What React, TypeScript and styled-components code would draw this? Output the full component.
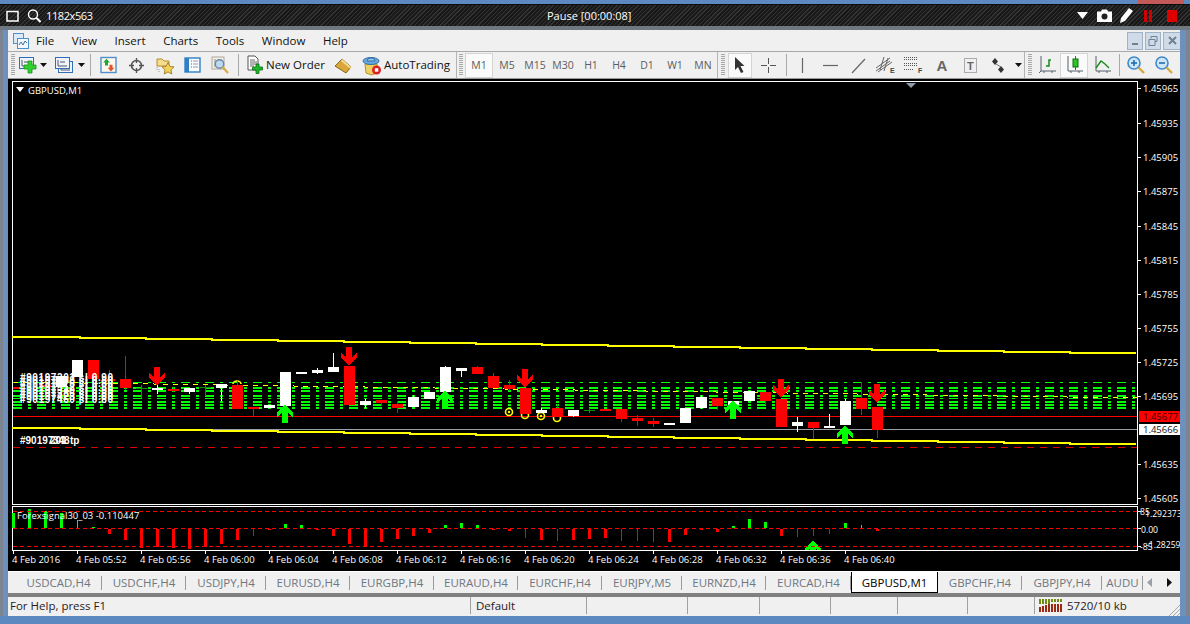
import React from "react";
import styled, { createGlobalStyle } from "styled-components";

const UI_FONT = `"Open Sans", "Noto Sans", "Liberation Sans", sans-serif`;

const GlobalStyle = createGlobalStyle`
  html, body {
    margin: 0;
    padding: 0;
    overflow: hidden;
    background: #5b89c0;
  }
  * {
    box-sizing: border-box;
  }
`;

/* ---------- chart data ---------- */

// wickTop, bodyTop, bodyBottom, wickBottom, colour; candles sit 16px apart from x=13
type Candle = [number, number, number, number, string];
const W = "#ffffff";
const R = "#ff0000";
const G = "#0f8f0f";

const candles: Candle[] = [
  [0, 0, 0, 0, ""], [0, 0, 0, 0, ""], [385, 385, 387, 387, R], [376, 376, 387, 387, W],
  [360, 360, 377, 377, W], [360, 360, 379, 379, R], [370, 379, 381, 381, R], [356, 379, 388, 390, R],
  [385, 388, 389, 398, G], [383, 388, 390, 394, W], [387, 389, 391, 392, R], [388, 388, 392, 394, W],
  [385, 387, 388, 396, G], [384, 384, 388, 401, W], [381, 385, 409, 409, R], [407, 407, 409, 416, R],
  [405, 405, 408, 408, W], [372, 372, 406, 406, W], [372, 372, 374, 374, W], [368, 370, 373, 374, W],
  [353, 367, 372, 372, W], [366, 366, 405, 405, R], [399, 401, 405, 408, W], [400, 400, 403, 406, R],
  [401, 404, 408, 413, R], [395, 397, 407, 407, W], [392, 392, 399, 399, W], [366, 367, 392, 392, W],
  [368, 368, 371, 377, W], [366, 367, 374, 374, R], [373, 376, 388, 388, R], [380, 385, 389, 391, R],
  [388, 388, 414, 414, R], [408, 410, 413, 413, W], [404, 408, 417, 417, R], [410, 410, 416, 417, W],
  [408, 410, 411, 413, G], [409, 409, 411, 411, R], [409, 409, 419, 422, R], [415, 418, 421, 426, R],
  [418, 421, 424, 427, R], [423, 423, 425, 425, W], [408, 408, 423, 423, W], [395, 397, 408, 409, W],
  [398, 398, 406, 410, R], [401, 401, 405, 405, W], [391, 391, 401, 401, W], [392, 392, 401, 405, R],
  [399, 399, 427, 427, R], [417, 422, 426, 432, W], [422, 422, 428, 441, R], [414, 426, 428, 428, W],
  [399, 401, 425, 425, W], [382, 398, 409, 415, R], [407, 407, 430, 438, R],
];

// indicator bars: height from the zero line (negative goes up), thin bars are 1px wide
const GREEN_BAR = "#00ff00";
type Bar = [number, boolean?];
const bars: Bar[] = [
  [-15], [-19], [-17], [-15], [-8, true], [-1], [5], [11], [19], [18], [19], [20], [18], [15], [11], [7, true],
  [1], [-4], [-3], [1], [7], [15], [17], [13], [10], [7], [4], [-3], [-5], [-3], [1], [2], [9, true], [11], [12, true],
  [11], [10], [9], [12, true], [12, true], [13, true], [13], [6], [1], [3], [-2], [-9], [-6], [7], [8, true], [7, true], [5, true],
  [-5], [-3, true], [2],
];

const priceLabels: [string, number][] = [
  ["1.45965", 88], ["1.45935", 123], ["1.45905", 157], ["1.45875", 191], ["1.45845", 226],
  ["1.45815", 260], ["1.45785", 294], ["1.45755", 328], ["1.45725", 362], ["1.45695", 396],
  ["1.45635", 464], ["1.45605", 498],
];

const timeLabels = [
  "4 Feb 2016", "4 Feb 05:52", "4 Feb 05:56", "4 Feb 06:00", "4 Feb 06:04", "4 Feb 06:08", "4 Feb 06:12",
  "4 Feb 06:16", "4 Feb 06:20", "4 Feb 06:24", "4 Feb 06:28", "4 Feb 06:32", "4 Feb 06:36", "4 Feb 06:40",
];

const greenRows: [number, number][] = [
  [382, 1], [387, 2], [390, 2], [395, 2], [398, 1], [401, 2], [404, 2], [407, 2],
];

const stepped = (start: number) => {
  let d = `M12 ${start}H80`;
  for (let i = 1; i <= 16; i++) {
    d += `V${start + i}H${Math.min(80 + i * 66, 1137)}`;
  }
  return d;
};

const downArrow = (x: number, y: number) =>
  `M${x - 3} ${y}h6v10l5 -4v4l-8 9l-8 -9v-4l5 4z`;
const upArrow = (x: number, y: number) =>
  `M${x - 3} ${y}h6v-10l5 4v-4l-8 -9l-8 9v4l5 -4z`;

const tradeLines = [0, 1, 2, 3, 4, 5, 6, 7];

function ChartDrawing() {
  return (
    <ChartSvg viewBox="8 79 1172 492" width={1172} height={492}>
      <defs>
        <clipPath id="subClip">
          <rect x={13} y={507} width={1124} height={43} />
        </clipPath>
        <clipPath id="rightClip">
          <rect x={1138} y={500} width={42} height={60} />
        </clipPath>
      </defs>

      <g shapeRendering="crispEdges">
        {/* frames */}
        <rect x={12.5} y={81.5} width={1125} height={423} fill="none" stroke="#fff" />
        <rect x={12.5} y={506.5} width={1125} height={44} fill="none" stroke="#fff" />

        {/* green grid */}
        {greenRows.map(([y, h]) => (
          <line key={y} x1={13} x2={1136} y1={y + h / 2} y2={y + h / 2} stroke="#00ff00" strokeWidth={h} strokeDasharray="9 6 3 6" />
        ))}
        <line x1={13} x2={1137} y1={382} y2={398} stroke="#ffff00" strokeDasharray="5 5" />

        {/* levels */}
        <line x1={13} x2={1137} y1={416.5} y2={416.5} stroke="#ff0000" />
        <line x1={212} x2={1137} y1={429.5} y2={429.5} stroke="#9aa0a8" />
        <line x1={13} x2={1137} y1={447.5} y2={447.5} stroke="#e00000" strokeDasharray="7 6" />
        <rect x={13} y={387} width={6} height={2} fill="#ff0000" />
      </g>

      <g fill="none" stroke="#ffff00" strokeWidth={1.6}>
        <circle cx={509} cy={412} r={3.5} />
        <circle cx={525} cy={415} r={3.5} />
        <circle cx={541} cy={416} r={3.5} />
        <circle cx={557} cy={418} r={3.5} />
        <path d="M233 384a4 3 0 0 1 8 0" />
      </g>
      <g fill="#ffff00">
        <circle cx={509} cy={412} r={1.2} />
        <circle cx={541} cy={416} r={1.2} />
      </g>

      <g shapeRendering="crispEdges">
        {/* candles */}
        {candles.map(([wt, t, b, wb, c], i) =>
          c ? (
            <g key={i} fill={c}>
              <rect x={13 + i * 16} y={wt} width={1} height={wb - wt || 1} />
              <rect x={8 + i * 16} y={t} width={11} height={b - t} />
            </g>
          ) : null
        )}

        {/* bands */}
        <path d={stepped(337)} fill="none" stroke="#ffff00" strokeWidth={2} />
        <path d={stepped(428)} fill="none" stroke="#ffff00" strokeWidth={2} />

        {/* arrows */}
        <g fill="#ff0000">
          {[[157, 367], [349, 347], [525, 369], [781, 379], [877, 384]].map(([x, y]) => (
            <path key={x} d={downArrow(x, y)} />
          ))}
        </g>
        <g fill="#00ff00">
          {[[285, 423], [445, 409], [733, 419], [845, 444]].map(([x, y]) => (
            <path key={x} d={upArrow(x, y)} />
          ))}
          <path d={upArrow(813, 559)} clipPath="url(#subClip)" />
        </g>
        <rect x={79} y={377} width={2} height={28} fill="#16d8e8" />
      </g>

      {/* overlapping trade labels */}
      <g fill="#fff" fontFamily={`"Liberation Sans", sans-serif`} fontSize={10} fontWeight={700}>
        {tradeLines.map((n) => (
          <text key={n} x={20} y={381 + n * 3.2} letterSpacing={0.6}>
            #90197{201 + n * 37} sl 0.{n === 0 ? "90" : "80"}
          </text>
        ))}
        <text x={20} y={444}>#90197</text>
        <text x={50} y={444}>201</text>
        <text x={53} y={444}>348</text>
        <text x={70} y={444}>tp</text>
      </g>

      {/* indicator window */}
      <g shapeRendering="crispEdges">
        {bars.map(([v, thin], i) => {
          const green = v < 0;
          const h = Math.abs(v);
          const w = thin ? 1 : 3;
          return (
            <rect
              key={i}
              x={13 + i * 16 - (thin ? 0 : 1)}
              y={green ? 528 - h : 529}
              width={w}
              height={h}
              fill={green ? GREEN_BAR : R}
            />
          );
        })}
        {[511, 528, 546].map((y) => (
          <line key={y} x1={13} x2={1137} y1={y + 0.5} y2={y + 0.5} stroke="#ff0000" strokeDasharray="4 3" />
        ))}
      </g>

      {/* price scale */}
      <g fill="#fff" shapeRendering="crispEdges">
        {priceLabels.map(([, y]) => (
          <rect key={y} x={1138} y={y} width={3} height={1} />
        ))}
        {[511, 528, 546].map((y) => (
          <rect key={y} x={1138} y={y} width={3} height={1} />
        ))}
        {timeLabels.map((_, i) => (
          <rect key={i} x={13 + i * 64} y={551} width={1} height={3} />
        ))}
      </g>
      <ChartText>
        {priceLabels.map(([p, y]) => (
          <text key={p} x={1143} y={y + 4}>{p}</text>
        ))}
        {timeLabels.map((t, i) => (
          <text key={t} x={12 + i * 64} y={563}>{t}</text>
        ))}
        <text x={28} y={94}>GBPUSD,M1</text>
        <text x={17} y={519}>Forexsignal30_03 -0.110447</text>
        <g clipPath="url(#rightClip)" fontSize={8.6}>
          <text x={1140} y={515}>85</text>
          <text x={1145} y={517}>1.292373</text>
          <text x={1141} y={533}>0.00</text>
          <text x={1140} y={550}>-85</text>
          <text x={1146} y={548}>-1.282597</text>
        </g>
      </ChartText>

      <path d="M16 87h8l-4 5z" fill="#fff" />
      <path d="M906 83h10l-5 5z" fill="#8f9aa8" />

      {/* current price boxes */}
      <rect x={1139} y={411} width={41} height={11} fill="#ff0000" shapeRendering="crispEdges" />
      <rect x={1139} y={424} width={41} height={11} fill="#fff" shapeRendering="crispEdges" />
      <ChartText>
        <text x={1143} y={420} fill="#3a0000">1.45677</text>
        <text x={1143} y={433} fill="#111">1.45666</text>
      </ChartText>
    </ChartSvg>
  );
}

/* ---------- toolbar icons ---------- */

const ChartBox = () => (
  <g>
    <rect x="1.5" y="2.5" width="14" height="11" fill="#eef4fb" stroke="#2f6fb5" />
    <path d="M4 5v6h9M6 7h5" fill="none" stroke="#556" strokeWidth="1" />
  </g>
);

const NewChartIcon = () => (
  <svg width="20" height="20" viewBox="0 0 20 20">
    <ChartBox />
    <path d="M10 6h4v4h4v4h-4v4h-4v-4H6v-4h4z" fill="#2ed12e" stroke="#1c8f1c" strokeWidth="0.8" />
  </svg>
);

const ProfilesIcon = () => (
  <svg width="20" height="20" viewBox="0 0 20 20">
    <g transform="translate(3 4)"><ChartBox /></g>
    <ChartBox />
  </svg>
);

const MarketWatchIcon = () => (
  <svg width="17" height="18" viewBox="0 0 17 18">
    <rect x="1" y="1.5" width="15" height="15" fill="#fdf7ee" stroke="#4f8fcb" strokeWidth="1.4" />
    <path d="M6.5 2.8l3.3 3.7H8v3H5v-3H3.2z" fill="#1dab2f" />
    <path d="M11 15.5l-3.3-3.7h1.8V8.8h3v3h1.8z" fill="#e0562d" />
  </svg>
);

const CrosshairIcon = () => (
  <svg width="17" height="17" viewBox="0 0 17 17" fill="none" stroke="#555">
    <circle cx="8.5" cy="8.5" r="5" strokeWidth="1.6" />
    <path d="M8.5 1v5M8.5 11v5M1 8.5h5M11 8.5h5" strokeWidth="1.4" />
  </svg>
);

const FavoritesIcon = () => (
  <svg width="19" height="19" viewBox="0 0 19 19">
    <path d="M1 3h5l2 2h5v5H1z" fill="#f6dc8e" stroke="#b88a2a" />
    <path d="M1 11v3M3 13v3" stroke="#999" strokeDasharray="1 1" />
    <path d="M12 6.5l1.9 3.9 4.1.5-3 3 .8 4.1-3.8-2.1-3.8 2.1.8-4.1-3-3 4.1-.5z" fill="#f3d25a" stroke="#a9852a" />
  </svg>
);

const NavigatorIcon = () => (
  <svg width="17" height="16" viewBox="0 0 17 16">
    <rect x="1" y="1" width="15" height="14" fill="#f8fbff" stroke="#2f7fc6" strokeWidth="1.4" />
    <rect x="1" y="1" width="4" height="14" fill="#2f7fc6" />
    <path d="M7 4h1M7 7h1M7 10h1" stroke="#d33" />
    <path d="M9 4h5M9 7h5M9 10h5" stroke="#99a" />
  </svg>
);

const TesterIcon = () => (
  <svg width="19" height="19" viewBox="0 0 19 19" fill="none">
    <rect x="1" y="1" width="12" height="12" fill="#f4efe6" stroke="#b0a79a" />
    <path d="M4 3v8M8 3v8" stroke="#888" />
    <circle cx="8.5" cy="8" r="4.2" fill="#bcd9f2" stroke="#6a88a8" strokeWidth="1.4" />
    <path d="M11.5 11l5.5 6" stroke="#d9a83a" strokeWidth="2" />
  </svg>
);

const NewOrderIcon = () => (
  <svg width="17" height="20" viewBox="0 0 17 20">
    <path d="M1 1h7l3 3v11H1z" fill="#fff" stroke="#555" />
    <path d="M3 5h5M3 7h7M3 9h7M3 11h4" stroke="#666" />
    <path d="M9 9h3v3h3.500v3H12v3.500H9V15H5.500v-3H9z" fill="#1fb52c" stroke="#0b6f18" strokeWidth="0.8" />
  </svg>
);

const BookIcon = () => (
  <svg width="19" height="17" viewBox="0 0 19 17">
    <path d="M1 9l7-7 9 8-5 6z" fill="#d9a63a" stroke="#8a6419" />
    <path d="M8 2l9 8-.5 2L7 4z" fill="#f3dc96" />
  </svg>
);

const AutoTradingIcon = () => (
  <svg width="20" height="21" viewBox="0 0 20 21">
    <path d="M3 9h12l1 8-6 3-6-2z" fill="#f0d15f" stroke="#b4932a" />
    <ellipse cx="9" cy="6" rx="8" ry="3.500" fill="#65a8de" stroke="#356ea5" />
    <path d="M5 6a4 3 0 0 1 8 0z" fill="#9cc9ec" stroke="#356ea5" />
    <circle cx="14.500" cy="15" r="4.500" fill="#dc1f1f" />
    <rect x="12.800" y="13.200" width="3.500" height="3.500" fill="#fff" />
  </svg>
);

const CursorIcon = () => (
  <svg width="12" height="18" viewBox="0 0 12 18">
    <path d="M1 1v13l3-3 3 6 2.500-1-3-6h4z" fill="#333" />
  </svg>
);

const CrossIcon = () => (
  <svg width="17" height="17" viewBox="0 0 17 17" stroke="#555" shapeRendering="crispEdges">
    <path d="M8.500 1v6M8.500 10v6M1 8.500h6M10 8.500h6" />
  </svg>
);

const LineIcon = ({ d }: { d: string }) => (
  <svg width="19" height="19" viewBox="0 0 19 19" fill="none" stroke="#666" strokeWidth="1.200">
    <path d={d} />
  </svg>
);

const ChannelIcon = () => (
  <svg width="22" height="20" viewBox="0 0 22 20" fill="none" stroke="#666">
    <path d="M1 13L15 3M1 16L15 6M3 17L17 7M5 15l4-13M9 16l4-13" />
    <text x="15" y="18" fontFamily="Liberation Sans, sans-serif" fontWeight="700" fontSize="7" fill="#444" stroke="none">E</text>
  </svg>
);

const FiboIcon = () => (
  <svg width="22" height="20" viewBox="0 0 22 20" fill="none" stroke="#555" strokeDasharray="1 1" shapeRendering="crispEdges">
    <path d="M1 2.500h14M1 4.500h14M1 8.500h14M1 10.500h14M1 14.500h10" />
    <text x="15" y="18" fontFamily="Liberation Sans, sans-serif" fontWeight="700" fontSize="7" fill="#444" stroke="none" strokeDasharray="0">F</text>
  </svg>
);

const TextBoxIcon = () => (
  <svg width="15" height="17" viewBox="0 0 15 17" fill="none">
    <rect x="1.500" y="1.500" width="12" height="14" stroke="#666" strokeDasharray="1 1" />
    <text x="4" y="13" fontFamily="Liberation Sans, sans-serif" fontWeight="700" fontSize="11" fill="#666">T</text>
  </svg>
);

const ArrowsIcon = () => (
  <svg width="16" height="17" viewBox="0 0 16 17">
    <path d="M5 1l3 3.500-3 3.500-3-3.500z" fill="#333" />
    <path d="M11 9l3 3.500-3 3.500-3-3.500z" fill="#333" />
    <path d="M6 7l5 3" stroke="#777" />
  </svg>
);

const BarChartIcon = () => (
  <svg width="19" height="20" viewBox="0 0 19 20" fill="none">
    <path d="M3 1v15h15" stroke="#57606a" />
    <path d="M3 16l-2 2M6 16v2M14 16v2" stroke="#57606a" />
    <path d="M8 11h3V5h2" stroke="#168a16" strokeWidth="1.500" />
  </svg>
);

const CandleChartIcon = () => (
  <svg width="19" height="20" viewBox="0 0 19 20" fill="none">
    <path d="M3 1v15h15M6 16v2M14 16v2" stroke="#57606a" />
    <path d="M10.500 1v14" stroke="#168a16" />
    <rect x="8" y="4" width="5" height="8" fill="#27c827" stroke="#0e6e0e" />
  </svg>
);

const AreaChartIcon = () => (
  <svg width="19" height="20" viewBox="0 0 19 20" fill="none">
    <path d="M3 1v15h15M6 16v2M14 16v2" stroke="#57606a" />
    <path d="M3 13l5-7 4 3 4 4" stroke="#168a16" strokeWidth="1.400" />
  </svg>
);

const ZoomIcon = ({ plus }: { plus?: boolean }) => (
  <svg width="20" height="20" viewBox="0 0 20 20" fill="none">
    <circle cx="8" cy="8" r="6" fill="#cfe6f8" stroke="#3f8ac8" strokeWidth="1.600" />
    <path d="M5 8h6" stroke="#1f6cb0" strokeWidth="1.600" />
    {plus && <path d="M8 5v6" stroke="#1f6cb0" strokeWidth="1.600" />}
    <path d="M12.500 12.500l5.500 5.500" stroke="#d8a93b" strokeWidth="2.400" />
  </svg>
);

const Caret = () => (
  <svg width="7" height="4" viewBox="0 0 7 4">
    <path d="M0 0h7L3.500 4z" fill="#111" />
  </svg>
);

/* ---------- app ---------- */

const tabs: [string, number][] = [
  ["USDCAD,H4", 87], ["USDCHF,H4", 84], ["USDJPY,H4", 80], ["EURUSD,H4", 84], ["EURGBP,H4", 84],
  ["EURAUD,H4", 84], ["EURCHF,H4", 84], ["EURJPY,M5", 80], ["EURNZD,H4", 84], ["EURCAD,H4", 85],
  ["GBPUSD,M1", 87], ["GBPCHF,H4", 84], ["GBPJPY,H4", 80],
];

const periods = ["M1", "M5", "M15", "M30", "H1", "H4", "D1", "W1", "MN"];
const menus = ["File", "View", "Insert", "Charts", "Tools", "Window", "Help"];
const statusWidths = [116, 101, 72, 71, 67, 70, 67];

export default function App() {
  return (
    <Page>
      <GlobalStyle />
      <TopStrip>
        <RedEdge />
      </TopStrip>
      <Recorder>
        <RecorderSide>
          <svg width="13" height="12" viewBox="0 0 13 12" fill="none" stroke="#fff" strokeWidth="1.500">
            <path d="M1 1.500h11v9.500H1z" />
          </svg>
          <svg width="14" height="14" viewBox="0 0 14 14" fill="none" stroke="#fff" strokeWidth="1.400">
            <circle cx="6" cy="5.500" r="4.500" />
            <path d="M9.500 9l4 4" strokeWidth="2" />
          </svg>
          <RecorderText>1182x563</RecorderText>
        </RecorderSide>
        <PauseText>Pause [00:00:08]</PauseText>
        <RecorderTool $w={22}>
          <svg width="11" height="7" viewBox="0 0 11 7"><path d="M0 0h11L5.500 7z" fill="#fff" /></svg>
        </RecorderTool>
        <RecorderTool $w={22}>
          <svg width="15" height="13" viewBox="0 0 15 13">
            <path d="M0 2.500h4l1-2h5l1 2h4V13H0z" fill="#fff" />
            <circle cx="7.500" cy="7.500" r="3" fill="#222" />
          </svg>
        </RecorderTool>
        <RecorderTool $w={22}>
          <svg width="14" height="15" viewBox="0 0 14 15"><path d="M10 0l4 3-8 10-5 2 1-5z" fill="#fff" /></svg>
        </RecorderTool>
        <RecorderTool $w={22}>
          <svg width="8" height="12" viewBox="0 0 8 12"><path d="M0 0h3v12H0zM5 0h3v12H5z" fill="#d00000" /></svg>
        </RecorderTool>
        <RecorderTool $w={26}>
          <svg width="10" height="12" viewBox="0 0 10 12"><rect width="10" height="12" fill="#e00000" /></svg>
        </RecorderTool>
      </Recorder>
      <GrayStrip />
      <Body>
        <LeftEdge />
        <Window>
          <MenuBar>
            <AppIcon width="16" height="16" viewBox="0 0 16 16">
              <rect x="0.500" y="0.500" width="10" height="10" fill="#dce9f7" stroke="#4f8fcb" />
              <rect x="4.500" y="5.500" width="11" height="10" fill="#f4f8fd" stroke="#4f8fcb" />
              <path d="M6 12l2-3 2 3 2-4 2 2" fill="none" stroke="#3a6ea8" />
            </AppIcon>
            {menus.map((m) => (
              <MenuItem key={m}>{m}</MenuItem>
            ))}
            <WindowButtons>
              <WindowButton>
                <svg width="8" height="8" viewBox="0 0 8 8"><rect x="1" y="6" width="6" height="2" fill="#6f8090" /></svg>
              </WindowButton>
              <WindowButton>
                <svg width="10" height="10" viewBox="0 0 10 10" fill="none" stroke="#6f8090">
                  <path d="M3 2.500V.500h6v5H7M1 3.500h6v6H1z" />
                </svg>
              </WindowButton>
              <WindowButton $wide>
                <svg width="9" height="9" viewBox="0 0 9 9" stroke="#6f8090" strokeWidth="2"><path d="M1 1l7 7M8 1l-7 7" /></svg>
              </WindowButton>
            </WindowButtons>
          </MenuBar>

          <Toolbar>
            <Grip $w={9} />
            <Slot $w={22}><NewChartIcon /></Slot>
            <Slot $w={9}><Caret /></Slot>
            <Slot $w={24} $ml={4}><ProfilesIcon /></Slot>
            <Slot $w={10}><Caret /></Slot>
            <Divider $w={9} />
            <Slot $w={26}><MarketWatchIcon /></Slot>
            <Slot $w={30}><CrosshairIcon /></Slot>
            <Slot $w={28}><FavoritesIcon /></Slot>
            <Slot $w={26}><NavigatorIcon /></Slot>
            <Slot $w={30}><TesterIcon /></Slot>
            <Divider $w={6} />
            <TextButton $w={89}>
              <NewOrderIcon />
              <ButtonLabel>New Order</ButtonLabel>
            </TextButton>
            <Slot $w={26}><BookIcon /></Slot>
            <TextButton $w={100} $pad={6}>
              <AutoTradingIcon />
              <ButtonLabel>AutoTrading</ButtonLabel>
            </TextButton>
            <EndCap />
            <Grip $w={8} />
            {periods.map((p, i) => (
              <Period key={p} $active={i === 0}>{p}</Period>
            ))}
            <EndCap />
            <Grip $w={10} />
            <Slot $w={24} $active><CursorIcon /></Slot>
            <Slot $w={32}><CrossIcon /></Slot>
            <Divider $w={4} />
            <Slot $w={28}><LineIcon d="M9.500 2v15" /></Slot>
            <Slot $w={28}><LineIcon d="M2 9.500h15" /></Slot>
            <Slot $w={28}><LineIcon d="M3 17L16 3" /></Slot>
            <Slot $w={28}><ChannelIcon /></Slot>
            <Slot $w={28}><FiboIcon /></Slot>
            <Slot $w={28}><GlyphA>A</GlyphA></Slot>
            <Slot $w={28}><TextBoxIcon /></Slot>
            <Slot $w={28}><ArrowsIcon /></Slot>
            <Slot $w={12}><Caret /></Slot>
            <EndCap />
            <Grip $w={9} />
            <Slot $w={26}><BarChartIcon /></Slot>
            <Slot $w={28} $active><CandleChartIcon /></Slot>
            <Slot $w={28}><AreaChartIcon /></Slot>
            <Divider $w={6} />
            <Slot $w={28}><ZoomIcon plus /></Slot>
            <Slot $w={28}><ZoomIcon /></Slot>
          </Toolbar>

          <ChartArea>
            <ChartDrawing />
          </ChartArea>

          <TabStrip>
            {tabs.map(([label, w]) => (
              <Tab key={label} $w={w} $active={label === "GBPUSD,M1"}>{label}</Tab>
            ))}
            <Tab $w={41}>AUDU</Tab>
            <TabArrows>
              <svg width="6" height="9" viewBox="0 0 6 9"><path d="M5 0v9L0 4.500z" fill="#9aa0a6" /></svg>
              <svg width="6" height="9" viewBox="0 0 6 9"><path d="M1 0v9l5-4.500z" fill="#111" /></svg>
            </TabArrows>
          </TabStrip>
          <GrayBand />
          <StatusBar>
            <StatusMain>For Help, press F1</StatusMain>
            {statusWidths.map((w, i) => (
              <StatusCell key={i} $w={w}>{i === 0 ? "Default" : ""}</StatusCell>
            ))}
            <StatusTraffic>
              <svg width="24" height="13" viewBox="0 0 24 13" shapeRendering="crispEdges">
                {Array.from({ length: 8 }, (_, i) => (
                  <g key={i}>
                    <rect x={i * 3} y={0} width={2} height={i < 4 ? 5 : 3} fill="#6f8a12" />
                    <rect x={i * 3} y={i < 4 ? 8 - i : 5} width={2} height={i < 4 ? 5 + i : 8} fill="#9a2a12" />
                  </g>
                ))}
              </svg>
              5720/10 kb
              <Resize width="12" height="12" viewBox="0 0 12 12" stroke="#a8a8a8">
                <path d="M12 1L1 12M12 5l-7 7M12 9l-3 3" />
              </Resize>
            </StatusTraffic>
          </StatusBar>
        </Window>
        <RightEdge />
      </Body>
      <BottomBlue />
    </Page>
  );
}

/* ---------- styles ---------- */

const Page = styled.div`
  width: 1190px;
  height: 624px;
  display: flex;
  flex-direction: column;
  overflow: hidden;
  font-family: ${UI_FONT};
`;

const TopStrip = styled.div`
  height: 4px;
  background: #5b89c0;
  display: flex;
  justify-content: flex-end;
  padding-right: 6px;
`;

const RedEdge = styled.div`
  width: 46px;
  background: #c25a5a;
`;

const Recorder = styled.div`
  height: 22px;
  display: flex;
  align-items: center;
  border-top: 1px solid #0c0c0c;
  background: repeating-linear-gradient(135deg, #161616 0 1px, #333 1px 2px, #1c1c1c 2px 3px);
  color: #fff;
  font-size: 11px;
`;

const RecorderSide = styled.div`
  display: flex;
  align-items: center;
  gap: 8px;
  padding-left: 6px;
  width: 547px;
`;

const RecorderText = styled.span`
  margin-left: -3px;
  letter-spacing: -0.4px;
`;

const PauseText = styled.span`
  width: 524px;
`;

const RecorderTool = styled.div<{ $w: number }>`
  width: ${(p) => p.$w}px;
  display: flex;
  align-items: center;
  justify-content: center;
`;

const GrayStrip = styled.div`
  height: 4px;
  background: #6f7881;
`;

const Body = styled.div`
  flex: 1;
  display: flex;
  min-height: 0;
`;

const LeftEdge = styled.div`
  width: 8px;
  background: linear-gradient(90deg, #7c858f 0 3px, #6d90bd 3px);
`;

const RightEdge = styled.div`
  flex: 1;
  background: linear-gradient(90deg, #6d90bd 0 6px, #7c858f 6px);
`;

const Window = styled.div`
  width: 1172px;
  display: flex;
  flex-direction: column;
  background: #f0f0f0;
`;

const MenuBar = styled.div`
  height: 22px;
  display: flex;
  align-items: center;
  padding-left: 5px;
  border-bottom: 1px solid #a8a8a8;
  font-size: 11.5px;
  color: #111;
`;

const AppIcon = styled.svg`
  margin-right: 7px;
`;

const MenuItem = styled.span`
  margin-right: 17.6px;
`;

const WindowButtons = styled.div`
  margin-left: auto;
  display: flex;
  gap: 2px;
  margin-right: -2px;
`;

const WindowButton = styled.div<{ $wide?: boolean }>`
  width: ${(p) => (p.$wide ? 19 : 16)}px;
  height: 18px;
  display: flex;
  align-items: center;
  justify-content: center;
  background: #cfdbe8;
  border: 1px solid #9fb3c8;
`;

const Toolbar = styled.div`
  height: 27px;
  display: flex;
  align-items: center;
  border-bottom: 1px solid #9a9a9a;
  font-size: 11.5px;
  color: #111;
`;

const Slot = styled.div<{ $w: number; $ml?: number; $active?: boolean }>`
  width: ${(p) => p.$w}px;
  margin-left: ${(p) => p.$ml || 0}px;
  height: 25px;
  flex: none;
  display: flex;
  align-items: center;
  justify-content: center;
  border: 1px solid ${(p) => (p.$active ? "#d4d4d4" : "transparent")};
  background: ${(p) => (p.$active ? "#fafafa" : "transparent")};
`;

const Grip = styled.div<{ $w: number }>`
  width: ${(p) => p.$w}px;
  height: 22px;
  flex: none;
  background: repeating-linear-gradient(180deg, #a8a8a8 0 1px, transparent 1px 2px) no-repeat center / 4px 100%;
`;

const Divider = styled.div<{ $w: number }>`
  width: ${(p) => p.$w}px;
  height: 22px;
  flex: none;
  background: linear-gradient(#a9a9a9, #a9a9a9) no-repeat center / 1px 100%;
`;

const EndCap = styled.div`
  width: 1px;
  height: 26px;
  flex: none;
  background: #b4b4b4;
`;

const TextButton = styled.div<{ $w: number; $pad?: number }>`
  width: ${(p) => p.$w}px;
  padding-left: ${(p) => p.$pad || 6}px;
  flex: none;
  display: flex;
  align-items: center;
  gap: 2px;
  white-space: nowrap;
`;

const ButtonLabel = styled.span`
  margin-bottom: 2px;
`;

const Period = styled.div<{ $active?: boolean }>`
  width: 28px;
  height: 25px;
  flex: none;
  display: flex;
  align-items: center;
  justify-content: center;
  font-size: 10.5px;
  color: #5c5c5c;
  border: 1px solid ${(p) => (p.$active ? "#d4d4d4" : "transparent")};
  background: ${(p) => (p.$active ? "#fafafa" : "transparent")};
`;

const GlyphA = styled.span`
  font-family: "Liberation Sans", sans-serif;
  font-size: 15px;
  font-weight: 700;
  color: #666;
`;

const ChartArea = styled.div`
  height: 492px;
  background: #000;
`;

const ChartSvg = styled.svg`
  display: block;
`;

const ChartText = styled.g`
  fill: #fff;
  font-family: "Open Sans", "Liberation Sans", sans-serif;
  font-size: 9.5px;
`;

const TabStrip = styled.div`
  height: 22px;
  display: flex;
  padding-left: 7px;
  border-top: 1px solid #fff;
  overflow: hidden;
  font-size: 11.5px;
`;

const Tab = styled.div<{ $w: number; $active?: boolean }>`
  width: ${(p) => p.$w}px;
  flex: none;
  display: flex;
  align-items: center;
  justify-content: center;
  overflow: hidden;
  white-space: nowrap;
  color: ${(p) => (p.$active ? "#000" : "#6e7782")};
  background: ${(p) => (p.$active ? "#fff" : "transparent")};
  border: ${(p) => (p.$active ? "1px solid #000" : "none")};
  border-top: none;
  &:not(:last-of-type) {
    background-image: ${(p) => (p.$active ? "none" : "linear-gradient(#9a9a9a, #9a9a9a)")};
    background-repeat: no-repeat;
    background-position: right center;
    background-size: 1px 14px;
  }
`;

const TabArrows = styled.div`
  margin-left: 4px;
  width: 30px;
  display: flex;
  align-items: center;
  justify-content: space-between;
  padding-right: 5px;
`;

const GrayBand = styled.div`
  height: 4px;
  background: #808080;
`;

const StatusBar = styled.div`
  height: 19px;
  display: flex;
  align-items: center;
  font-size: 11.5px;
  color: #2a1a1a;
  white-space: nowrap;
  padding-bottom: 2px;
`;

const StatusMain = styled.div`
  width: 462px;
  padding-left: 2px;
`;

const StatusCell = styled.div<{ $w: number }>`
  width: ${(p) => p.$w}px;
  height: 100%;
  padding-left: 5px;
  flex: none;
  display: flex;
  align-items: center;
  border-left: 1px solid #a0a0a0;
`;

const StatusTraffic = styled.div`
  flex: 1;
  height: 100%;
  display: flex;
  align-items: center;
  gap: 4px;
  padding-left: 4px;
  border-left: 1px solid #a0a0a0;
  position: relative;
`;

const Resize = styled.svg`
  position: absolute;
  right: 0;
  bottom: -2px;
`;

const BottomBlue = styled.div`
  height: 8px;
  background: #5b89c0;
`;
